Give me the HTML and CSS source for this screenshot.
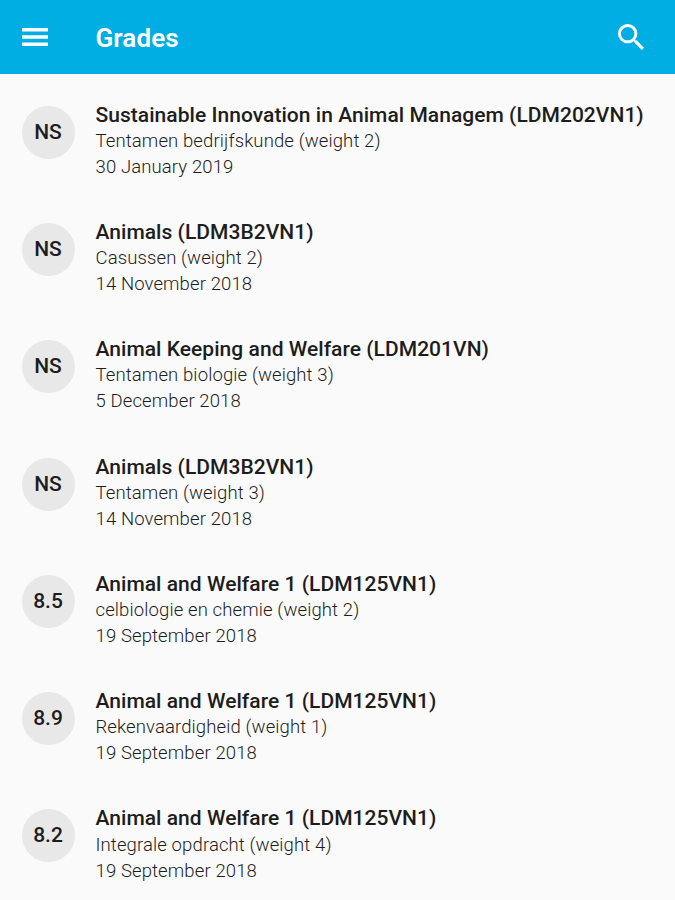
FILE: index.html
```html
<!DOCTYPE html>
<html lang="en">
<head>
    <meta charset="UTF-8">
    <title>Grades</title>
    <meta name="viewport" content="width=device-width, initial-scale=1">
    <link rel="stylesheet" href="styles.css">
</head>
<body>
    <header class="app-bar">
        <button class="icon-btn" type="button" aria-label="Menu">
            <svg class="menu-icon" viewBox="0 0 26 18"><path d="M0 0h26v3.400H0zM0 7.300h26v3.400H0zM0 14.600h26v3.400H0z"/></svg>
        </button>
        <h1>Grades</h1>
        <button class="icon-btn" type="button" aria-label="Search">
            <svg class="search-icon" viewBox="3 3 17.49 17.49"><path d="M15.5 14h-.79l-.28-.27A6.47 6.47 0 0 0 16 9.500 6.500 6.500 0 1 0 9.500 16c1.610 0 3.090-.59 4.230-1.570l.27.28v.79l5 4.990L20.490 19l-4.990-5zm-6 0C7.010 14 5 11.990 5 9.500S7.010 5 9.500 5 14 7.010 14 9.500 11.990 14 9.500 14z"/></svg>
        </button>
    </header>
    <ul class="grades">
        <li class="grade">
            <div class="badge">NS</div>
            <div class="info">
                <h2>Sustainable Innovation in Animal Managem (LDM202VN1)</h2>
                <p>Tentamen bedrijfskunde (weight 2)</p>
                <p>30 January 2019</p>
            </div>
        </li>
        <li class="grade">
            <div class="badge">NS</div>
            <div class="info">
                <h2>Animals (LDM3B2VN1)</h2>
                <p>Casussen (weight 2)</p>
                <p>14 November 2018</p>
            </div>
        </li>
        <li class="grade">
            <div class="badge">NS</div>
            <div class="info">
                <h2>Animal Keeping and Welfare (LDM201VN)</h2>
                <p>Tentamen biologie (weight 3)</p>
                <p>5 December 2018</p>
            </div>
        </li>
        <li class="grade">
            <div class="badge">NS</div>
            <div class="info">
                <h2>Animals (LDM3B2VN1)</h2>
                <p>Tentamen (weight 3)</p>
                <p>14 November 2018</p>
            </div>
        </li>
        <li class="grade">
            <div class="badge">8.5</div>
            <div class="info">
                <h2>Animal and Welfare 1 (LDM125VN1)</h2>
                <p>celbiologie en chemie (weight 2)</p>
                <p>19 September 2018</p>
            </div>
        </li>
        <li class="grade">
            <div class="badge">8.9</div>
            <div class="info">
                <h2>Animal and Welfare 1 (LDM125VN1)</h2>
                <p>Rekenvaardigheid (weight 1)</p>
                <p>19 September 2018</p>
            </div>
        </li>
        <li class="grade">
            <div class="badge">8.2</div>
            <div class="info">
                <h2>Animal and Welfare 1 (LDM125VN1)</h2>
                <p>Integrale opdracht (weight 4)</p>
                <p>19 September 2018</p>
            </div>
        </li>
    </ul>
</body>
</html>
```

FILE: styles.css
```css
body {
    font-family: Roboto, "Liberation Sans", sans-serif;
    background: #fafafa;
    color: #1d1d1d;
    margin: 0;
    height: 900px;
    overflow: hidden;
}
.app-bar {
    display: flex;
    align-items: center;
    box-sizing: border-box;
    height: 74px;
    padding: 0 31px 0 22px;
    background: #00aee3;
    color: #fff;
}
.app-bar h1 {
    flex: 1;
    margin: 2px 0 0 47.5px;
    font-size: 26px;
    font-weight: 600;
    letter-spacing: 0.1px;
}
.icon-btn {
    display: flex;
    padding: 0;
    border: none;
    background: none;
    fill: #fff;
}
.menu-icon { width: 26px; height: 18px; }
.search-icon { width: 26px; height: 26px; }
.grades {
    list-style: none;
    margin: 0;
    padding: 26.65px 0 0 21.5px;
}
.grade {
    display: flex;
    gap: 21px;
    height: 117.3px;
}
.badge {
    display: flex;
    align-items: center;
    justify-content: center;
    box-sizing: border-box;
    width: 53px;
    height: 53px;
    margin-top: 5px;
    padding-bottom: 1px;
    border-radius: 50%;
    background: #e8e8e8;
    font-size: 21px;
    font-weight: 500;
}
.info { white-space: nowrap; }
.info h2 {
    margin: 0;
    font-size: 21px;
    font-weight: 500;
    letter-spacing: 0.04px;
    line-height: 28px;
}
.info p {
    margin: 0;
    font-size: 18.5px;
    font-weight: 300;
    letter-spacing: 0.12px;
    line-height: 26px;
}
.info h2 + p { margin-top: -0.8px; }
```
